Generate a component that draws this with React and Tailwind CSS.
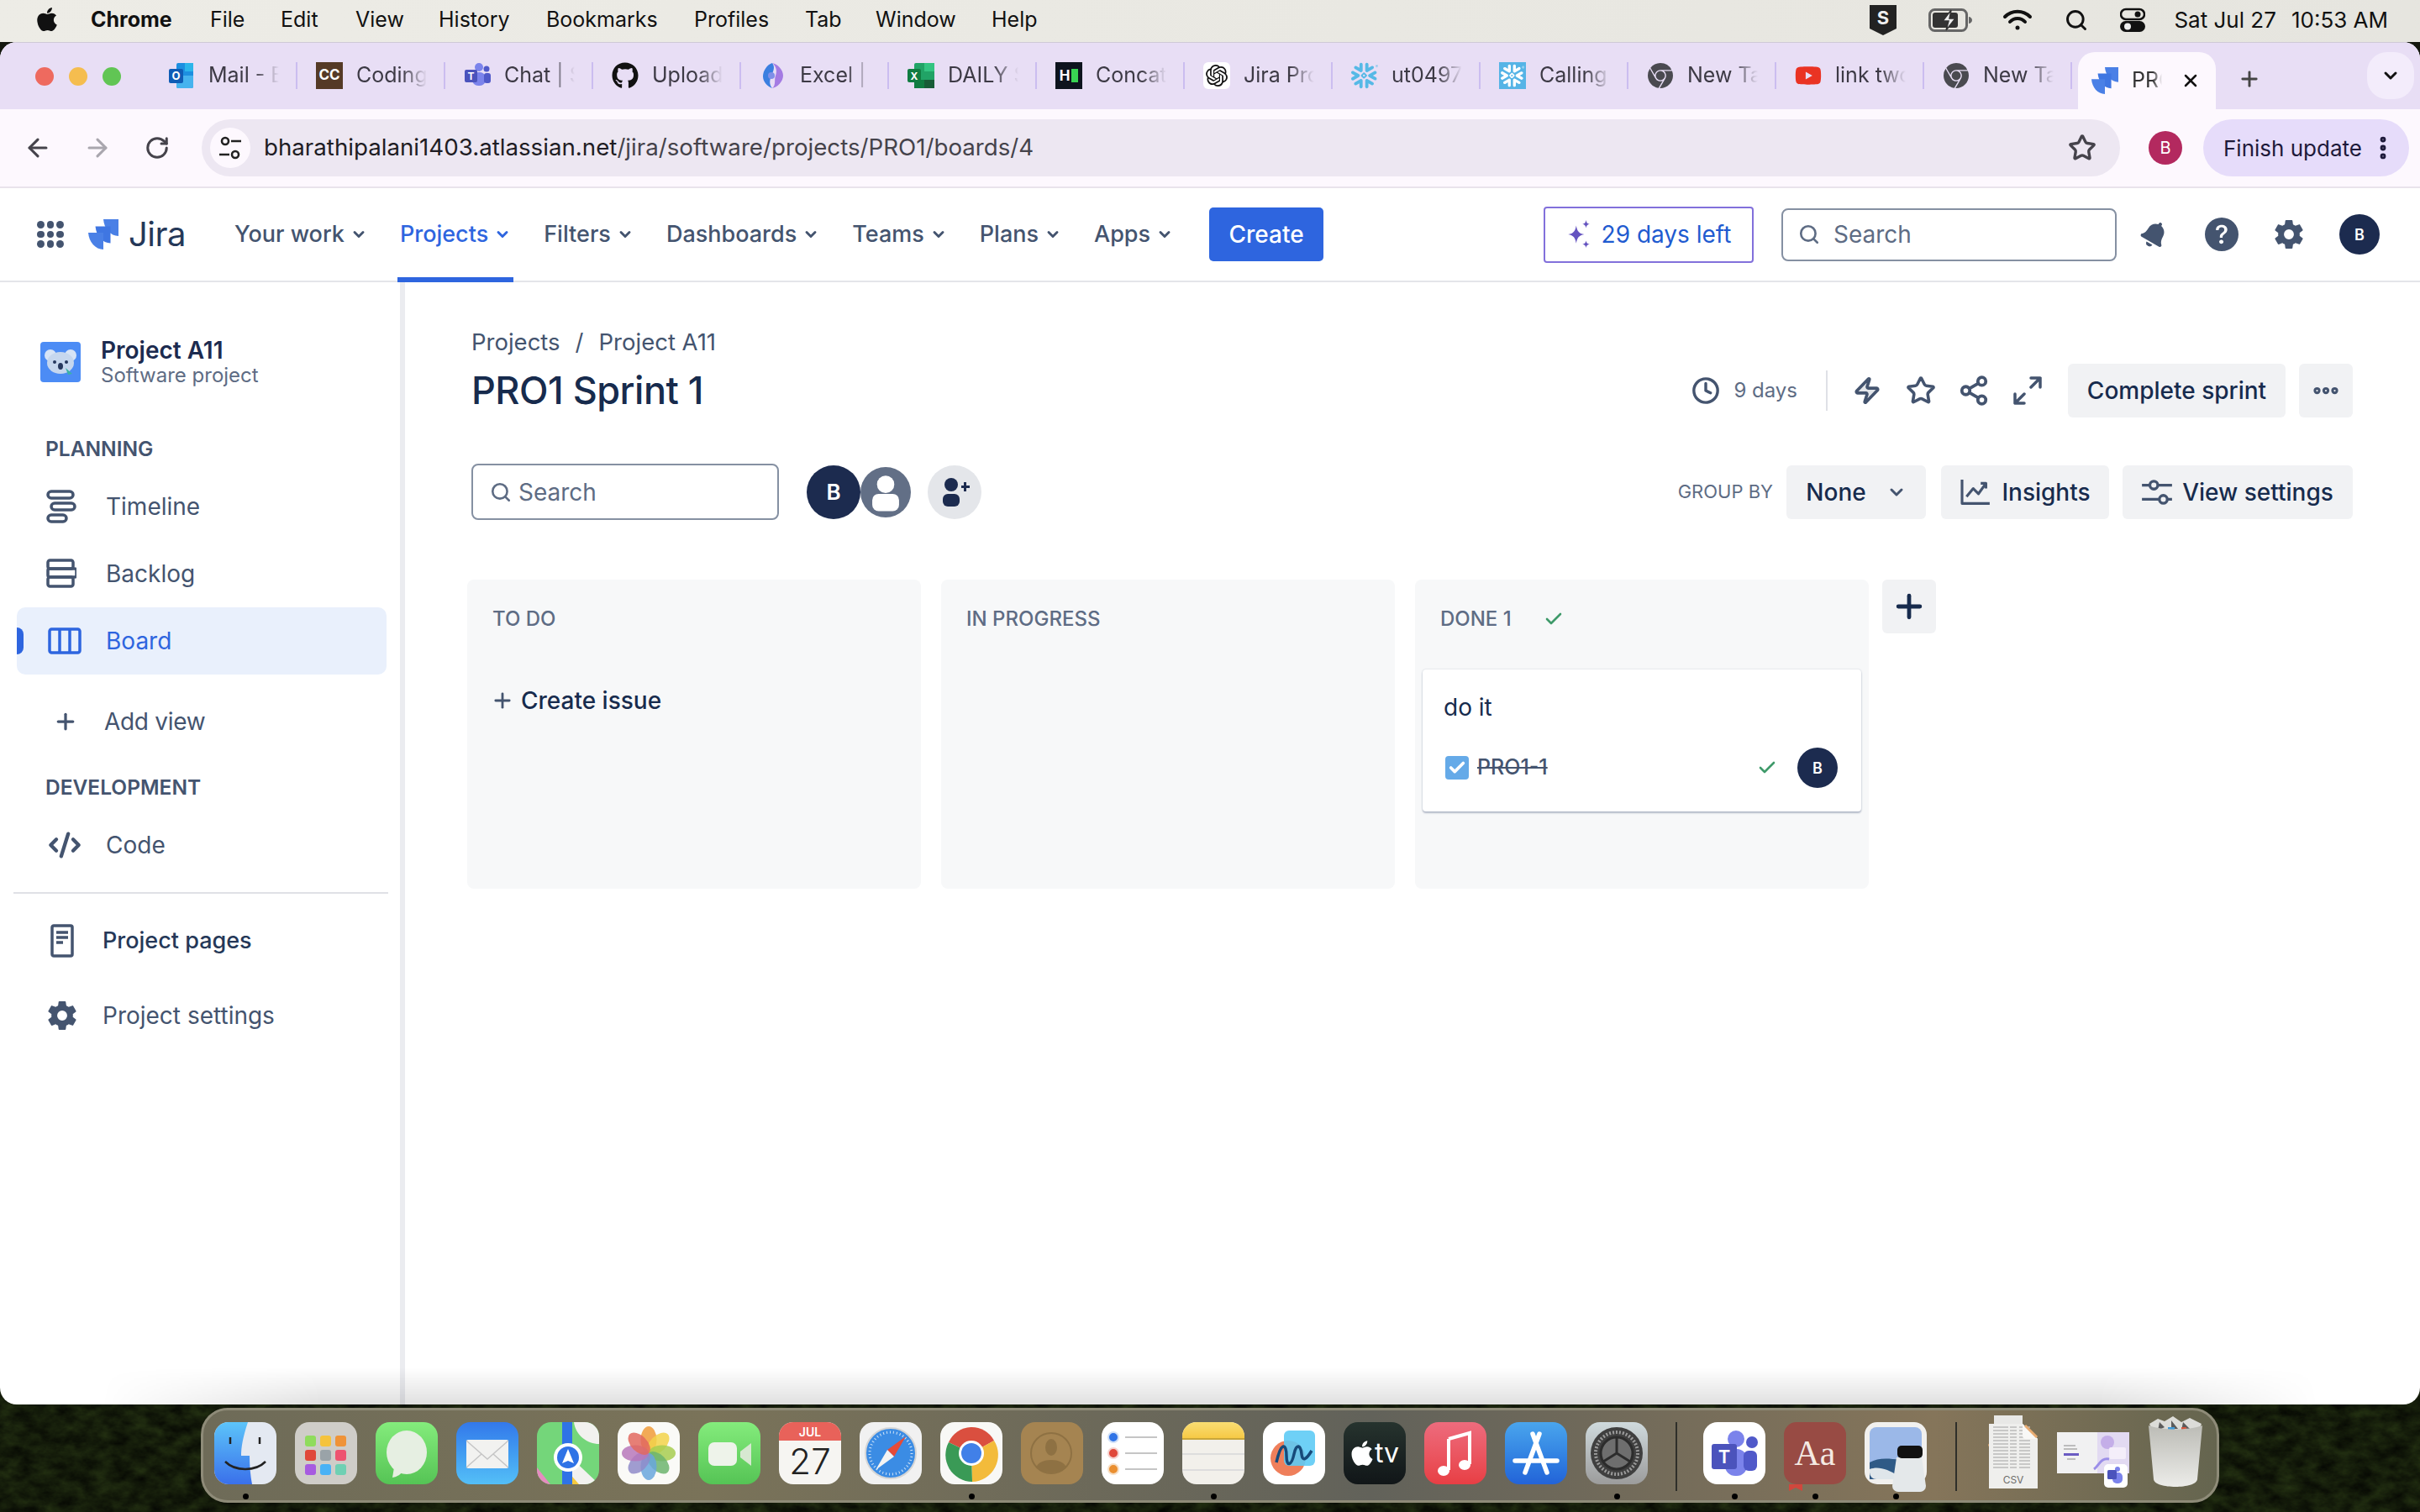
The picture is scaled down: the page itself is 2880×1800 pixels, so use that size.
import {
	ArrowLeft,
	ArrowRight,
	Check,
	ChevronDown,
	Clock,
	CodeXml,
	EllipsisVertical,
	Ellipsis,
	Plus,
	RotateCw,
	Search,
	Share2,
	Star,
	X,
	Zap
} from "lucide-react";
import { FaApple, FaGithub, FaBell, FaYoutube } from "react-icons/fa";
import { BsQuestionCircleFill } from "react-icons/bs";
import { IoSettingsSharp } from "react-icons/io5";
import { SiOpenai, SiSnowflake, SiGooglechrome } from "react-icons/si";

const JiraLogo = ({ className }) => (
	<svg viewBox="0 0 38 38" className={className}>
		<path d="M19 0h19v21C28 21 20 12 19 0z" fill="#4a80e6" />
		<path d="M9 9h19v21C18 30 10 21 9 9z" fill="#3f76e2" />
		<path d="M0 17h19v21C9 38 1 29 0 17z" fill="#4a80e6" />
	</svg>
);

const MenuBar = () => (
	<div className="relative flex h-[50px] items-center bg-gradient-to-r from-[#edece6] to-[#e6e5df] pb-[3px] pl-[42px] pr-[38px] text-[25px] text-[#111]">
		<FaApple className="h-[32px] w-[28px] -translate-y-[1px]" />
		<span className="ml-[38px] w-[142px] font-bold">Chrome</span>
		<span className="w-[84px]">File</span>
		<span className="w-[89px]">Edit</span>
		<span className="w-[99px]">View</span>
		<span className="w-[128px]">History</span>
		<span className="w-[176px]">Bookmarks</span>
		<span className="w-[132px]">Profiles</span>
		<span className="w-[84px]">Tab</span>
		<span className="w-[138px]">Window</span>
		<span>Help</span>
		<div className="ml-auto flex items-center">
			<svg viewBox="0 0 32 36" className="h-[36px] w-[32px]">
				<path d="M0 0h32v28l-16 8-16-8z" fill="#222" />
				<text x="16" y="23" textAnchor="middle" fontSize="22" fontWeight="700" fill="#eee" fontFamily="Inter">S</text>
			</svg>
			<svg viewBox="0 0 52 28" className="ml-[38px] h-[28px] w-[52px]">
				<rect x="1.5" y="1.5" width="44" height="25" rx="6" fill="none" stroke="#666" strokeWidth="3" />
				<rect x="5" y="5" width="30" height="18" rx="3" fill="#333" />
				<path d="M48 10v8c2 0 4-2 4-4s-2-4-4-4z" fill="#666" />
				<path d="M27 2l-10 13h7l-3 11 11-14h-7z" fill="#eee" stroke="#333" strokeWidth="1.5" />
			</svg>
			<svg viewBox="0 0 36 28" className="ml-[36px] h-[28px] w-[36px]" fill="none" stroke="#111" strokeWidth="4" strokeLinecap="round">
				<path d="M3 10a21 21 0 0 1 30 0" />
				<path d="M9 16a12 12 0 0 1 18 0" />
				<circle cx="18" cy="23" r="2.5" fill="#111" stroke="none" />
			</svg>
			<Search className="ml-[38px] h-[28px] w-[28px]" strokeWidth={2.5} />
			<svg viewBox="0 0 30 30" className="ml-[38px] h-[30px] w-[30px]">
				<rect x="1" y="2" width="28" height="12" rx="6" fill="none" stroke="#111" strokeWidth="2.5" />
				<circle cx="21" cy="8" r="3.5" fill="#111" />
				<rect x="0" y="16" width="30" height="13" rx="6.5" fill="#111" />
				<circle cx="9" cy="22.5" r="4" fill="#eee" />
			</svg>
			<span className="ml-[34px] text-[26px]">Sat Jul 27</span>
			<span className="ml-[18px] text-[26px]">10:53 AM</span>
		</div>
	</div>
);

const tabs = [
	{
		title: "Mail - B",
		icon: (
			<svg viewBox="0 0 32 32" className="h-[32px] w-[32px]">
				<rect x="10" y="1" width="20" height="30" rx="2" fill="#1d8fe0" />
				<rect x="20" y="1" width="10" height="10" fill="#2cb5ea" />
				<path d="M10 16l20 0v13a2 2 0 0 1-2 2H12a2 2 0 0 1-2-2z" fill="#46b3ee" />
				<rect x="1" y="8" width="17" height="17" rx="2" fill="#0f5cb5" />
				<text x="9.5" y="21" textAnchor="middle" fontSize="13" fontWeight="700" fill="#fff" fontFamily="Inter">O</text>
			</svg>
		)
	},
	{
		title: "Coding",
		icon: (
			<div className="flex h-[32px] w-[32px] items-center justify-center bg-[#553a26] text-[17px] font-bold text-white">
				CC
			</div>
		)
	},
	{
		title: "Chat | S",
		icon: (
			<svg viewBox="0 0 32 32" className="h-[32px] w-[32px]">
				<circle cx="18" cy="6" r="5" fill="#7b83eb" />
				<circle cx="27" cy="8" r="3.5" fill="#5059c9" />
				<rect x="10" y="12" width="16" height="16" rx="7" fill="#7b83eb" />
				<rect x="24" y="13" width="8" height="12" rx="3" fill="#5059c9" />
				<rect x="1" y="9" width="15" height="15" rx="2" fill="#4b53bc" />
				<text x="8.5" y="21" textAnchor="middle" fontSize="12" fontWeight="700" fill="#fff" fontFamily="Inter">T</text>
			</svg>
		)
	},
	{ title: "Upload", icon: <FaGithub className="h-[32px] w-[32px] text-[#111]" /> },
	{
		title: "Excel | I",
		icon: (
			<svg viewBox="0 0 32 32" className="h-[32px] w-[32px]">
				<path d="M15 1c6 1 13 8 13 15s-7 14-13 15c5-4 2-10 4-15S20 5 15 1z" fill="#a47be3" />
				<path d="M15 1C9 3 4 10 4 17c0 6 5 12 11 14-4-5-3-10-1-15s5-10 1-15z" fill="#3b7fe0" />
				<circle cx="14" cy="16" r="4" fill="#7f8fe8" />
			</svg>
		)
	},
	{
		title: "DAILY S",
		icon: (
			<svg viewBox="0 0 32 32" className="h-[32px] w-[32px]">
				<rect x="8" y="1" width="24" height="30" rx="2" fill="#21a366" />
				<rect x="20" y="1" width="12" height="10" fill="#33c481" />
				<rect x="20" y="21" width="12" height="10" fill="#185c37" />
				<rect x="8" y="21" width="12" height="10" fill="#107c41" />
				<rect x="0" y="8" width="16" height="16" rx="2" fill="#107c41" />
				<text x="8" y="20.5" textAnchor="middle" fontSize="12" fontWeight="700" fill="#fff" fontFamily="Inter">X</text>
			</svg>
		)
	},
	{
		title: "Concat",
		icon: (
			<div className="flex h-[32px] w-[32px] items-center justify-center gap-[2px] bg-[#0e141e]">
				<span className="text-[17px] font-bold leading-none text-white">H</span>
				<span className="h-[16px] w-[8px] bg-[#39d353]" />
			</div>
		)
	},
	{
		title: "Jira Pro",
		icon: (
			<div className="flex h-[32px] w-[32px] items-center justify-center rounded-[6px] bg-white">
				<SiOpenai className="h-[26px] w-[26px] text-[#111]" />
			</div>
		)
	},
	{ title: "ut0497", icon: <SiSnowflake className="h-[32px] w-[32px] text-[#56b9e6]" /> },
	{
		title: "Calling",
		icon: (
			<div className="flex h-[32px] w-[32px] items-center justify-center bg-[#56b4e6]">
				<SiSnowflake className="h-[28px] w-[28px] text-white" />
			</div>
		)
	},
	{ title: "New Ta", icon: <SiGooglechrome className="h-[30px] w-[30px] text-[#4a4a50]" /> },
	{ title: "link two", icon: <FaYoutube className="h-[32px] w-[32px] text-[#ea3323]" /> },
	{ title: "New Ta", icon: <SiGooglechrome className="h-[30px] w-[30px] text-[#4a4a50]" /> }
];

const TabStrip = () => (
	<div className="flex h-[80px] items-start border-t border-[#cfc9d6] bg-[#e8def5]">
		<div className="flex h-[79px] w-[178px] shrink-0 items-center gap-[18px] pl-[42px]">
			<span className="h-[22px] w-[22px] rounded-full bg-[#ee6a5f]" />
			<span className="h-[22px] w-[22px] rounded-full bg-[#f5bd4f]" />
			<span className="h-[22px] w-[22px] rounded-full bg-[#61c554]" />
		</div>
		{tabs.map((tab, i) => (
			<div key={i} className="mt-[23px] flex h-[32px] w-[176px] shrink-0 items-center gap-[16px] border-r-2 border-[#cbbdf0] pl-[22px]">
				<div className="flex h-[32px] w-[32px] shrink-0 items-center justify-center">{tab.icon}</div>
				<span className="w-[84px] overflow-hidden whitespace-nowrap text-[25px] text-[#3d3a45] [mask-image:linear-gradient(90deg,#000_65%,transparent)]">
					{tab.title}
				</span>
			</div>
		))}
		<div className="ml-[7px] mt-[11px] flex h-[68px] w-[164px] shrink-0 items-center rounded-t-[20px] bg-[#fdf8fe] pl-[16px]">
			<JiraLogo className="h-[32px] w-[32px]" />
			<span className="ml-[16px] w-[36px] overflow-hidden whitespace-nowrap text-[25px] text-[#333] [mask-image:linear-gradient(90deg,#000_70%,transparent)]">
				PRO
			</span>
			<X className="ml-[22px] h-[24px] w-[24px] text-[#111]" strokeWidth={2.5} />
		</div>
		<Plus className="ml-[26px] mt-[29px] h-[28px] w-[28px] text-[#444]" strokeWidth={2.5} />
		<div className="ml-[126px] mt-[11px] flex h-[56px] w-[56px] items-center justify-center rounded-[24px] bg-[#f3ecfb]">
			<ChevronDown className="h-[24px] w-[24px] text-[#111]" strokeWidth={3} />
		</div>
	</div>
);

const Toolbar = () => (
	<div className="flex h-[94px] items-center border-b-2 border-[#e9e3ec] bg-[#fdf8fe]">
		<ArrowLeft className="ml-[28px] h-[34px] w-[34px] text-[#45434b]" strokeWidth={2.2} />
		<ArrowRight className="ml-[37px] h-[34px] w-[34px] text-[#a9a6ae]" strokeWidth={2.2} />
		<RotateCw className="ml-[39px] h-[30px] w-[30px] text-[#45434b]" strokeWidth={2.4} />
		<div className="ml-[38px] flex h-[68px] w-[2283px] items-center rounded-full bg-[#ede7f2] pl-[10px] pr-[28px]">
			<div className="flex h-[48px] w-[48px] items-center justify-center rounded-full bg-[#fdf8fe]">
				<svg viewBox="0 0 26 30" className="h-[30px] w-[26px]" fill="none" stroke="#222" strokeWidth="2.600">
					<circle cx="7" cy="7" r="4" />
					<path d="M14 7h12M0 23h12" />
					<circle cx="19" cy="23" r="4" />
				</svg>
			</div>
			<span className="ml-[16px] text-[27.7px] text-[#1f1d24]">
				bharathipalani1403.atlassian.net<span className="text-[#45434b]">/jira/software/projects/PRO1/boards/4</span>
			</span>
			<Star className="ml-auto h-[34px] w-[34px] text-[#45434b]" strokeWidth={2.4} />
		</div>
		<div className="ml-[34px] flex h-[40px] w-[40px] items-center justify-center rounded-full bg-[#b3295f] text-[20px] text-white">
			B
		</div>
		<div className="ml-[25px] flex h-[68px] w-[245px] items-center rounded-full bg-[#e6dcfa] pl-[24px] text-[26px] text-[#1e1a3a]">
			Finish update
			<EllipsisVertical className="ml-[8px] h-[34px] w-[34px] text-[#1e1a3a]" strokeWidth={2.8} />
		</div>
	</div>
);

const navItems = ["Your work", "Projects", "Filters", "Dashboards", "Teams", "Plans", "Apps"];

const TopNav = () => (
	<div className="flex h-[112px] shrink-0 items-center border-b-2 border-[#e4e5e9] bg-white pr-[48px] text-[27px] text-[#44546f]">
		<div className="ml-[44px] grid h-[32px] w-[32px] grid-cols-3 gap-[3px]">
			{[0, 1, 2, 3, 4, 5, 6, 7, 8].map((i) => (
				<span key={i} className="rounded-full bg-[#44546f]" />
			))}
		</div>
		<JiraLogo className="ml-[28px] h-[36px] w-[38px]" />
		<span className="ml-[11px] text-[40px] font-normal leading-none tracking-[-0.5px] text-[#253858]">Jira</span>
		<div className="ml-[58px] flex h-full items-center gap-[39px]">
			{navItems.map((item) => (
				<div key={item} className={`relative flex h-full items-center gap-[7px] ${item === "Projects" ? "font-medium text-[#2e65df]" : "font-medium"}`}>
					{item}
					<ChevronDown className="h-[20px] w-[20px]" strokeWidth={3.5} />
					{item === "Projects" && <span className="absolute -bottom-[2px] -left-[3px] -right-[3px] h-[6px] bg-[#2e65df]" />}
				</div>
			))}
		</div>
		<div className="ml-[43px] flex h-[64px] w-[136px] items-center justify-center rounded-[5px] bg-[#2e65df] text-[28px] font-medium text-white">
			Create
		</div>
		<div className="ml-auto flex h-[67px] w-[250px] items-center justify-center gap-[12px] rounded-[4px] border-2 border-[#8270db] text-[28px] text-[#1f5bd0]">
			<svg viewBox="0 0 28 32" className="h-[34px] w-[30px]" fill="#6554c0">
				<path d="M11 6c1 6 3 9 9 10-6 1-8 4-9 10-1-6-3-9-9-10 6-1 8-4 9-10z" />
				<path d="M22 0c.5 3 1.500 4 4 4.500-2.500.5-3.500 1.500-4 4.500-.5-3-1.500-4-4-4.500 2.500-.5 3.500-1.500 4-4.500zM22 23c.5 2.500 1.500 3.500 4 4-2.500.5-3.500 1.500-4 4-.5-2.500-1.500-3.500-4-4 2.500-.5 3.500-1.500 4-4z" />
			</svg>
			29 days left
		</div>
		<div className="ml-[33px] flex h-[63px] w-[399px] items-center rounded-[8px] border-2 border-[#8590a2] pl-[18px] text-[28px] text-[#5e6c84]">
			<Search className="h-[26px] w-[26px]" strokeWidth={2.4} />
			<span className="ml-[16px]">Search</span>
		</div>
		<FaBell className="ml-[29px] h-[32px] w-[32px] rotate-[30deg] text-[#44546f]" />
		<BsQuestionCircleFill className="ml-[44px] h-[40px] w-[40px] text-[#44546f]" />
		<IoSettingsSharp className="ml-[41px] h-[38px] w-[38px] text-[#44546f]" />
		<div className="ml-[41px] flex h-[48px] w-[48px] items-center justify-center rounded-full bg-[#1c2b4f] text-[18px] font-semibold text-white">
			B
		</div>
	</div>
);

const TimelineIcon = () => (
	<svg viewBox="0 0 36 40" className="h-[40px] w-[36px]" fill="none" stroke="#44546f" strokeWidth="3.500">
		<rect x="2" y="2" width="30" height="8" rx="4" />
		<rect x="6" y="16" width="28" height="8" rx="4" />
		<rect x="2" y="30" width="22" height="8" rx="4" />
	</svg>
);

const BacklogIcon = () => (
	<svg viewBox="0 0 36 36" className="h-[36px] w-[36px]" fill="none" stroke="#44546f" strokeWidth="3.500">
		<rect x="2" y="2" width="30" height="10" rx="2.500" />
		<rect x="2" y="12" width="34" height="10" rx="2" />
		<rect x="2" y="22" width="30" height="11" rx="2.500" />
	</svg>
);

const BoardIcon = () => (
	<svg viewBox="0 0 40 32" className="h-[32px] w-[40px]" fill="none" stroke="#2e65df" strokeWidth="3.500">
		<rect x="2" y="2" width="36" height="28" rx="2.500" />
		<path d="M14 2v28M26 2v28" />
	</svg>
);

const PagesIcon = () => (
	<svg viewBox="0 0 28 40" className="h-[40px] w-[28px]" fill="none" stroke="#44546f" strokeWidth="3.500">
		<rect x="2" y="2" width="24" height="36" rx="2" />
		<path d="M7 10h14M7 16h14M7 22h8" />
	</svg>
);

const SideRow = ({ icon, label, active, iconBox = "ml-[35px] w-[56px]", textClass = "" }) => (
	<div className={`relative ml-[20px] mr-[16px] flex h-[80px] items-center rounded-[10px] text-[28px] ${active ? "bg-[#e9f0fc] text-[#2e65df]" : "text-[#44546f]"} ${textClass}`}>
		{active && <span className="absolute left-0 h-[32px] w-[8px] rounded-r-full bg-[#2e65df]" />}
		<div className={`flex shrink-0 items-center ${iconBox}`}>{icon}</div>
		<span className="ml-[15px]">{label}</span>
	</div>
);

const Sidebar = () => (
	<aside className="w-[476px] shrink-0">
		<div className="ml-[48px] mt-[69px] flex h-[52px] items-center">
			<svg viewBox="0 0 48 48" className="h-[48px] w-[48px]">
				<rect width="48" height="48" rx="4" fill="#4c8cf5" />
				<circle cx="12" cy="16" r="7" fill="#d7e4f6" />
				<circle cx="36" cy="16" r="7" fill="#d7e4f6" />
				<ellipse cx="24" cy="25" rx="16" ry="13" fill="#c6d7ee" />
				<circle cx="17" cy="24" r="2" fill="#26385e" />
				<circle cx="31" cy="24" r="2" fill="#26385e" />
				<ellipse cx="24" cy="29" rx="3" ry="4" fill="#26385e" />
				<path d="M30 31l8 7-5 1z" fill="#3bb2a6" />
			</svg>
			<div className="ml-[24px]">
				<div className="text-[28px] font-semibold leading-[32px] text-[#1c2b4f]">Project A11</div>
				<div className="text-[24px] leading-[28px] text-[#5e6c84]">Software project</div>
			</div>
		</div>
		<div className="ml-[54px] mt-[62px] h-[30px] text-[24.500px] font-semibold leading-[30px] text-[#44546f]">PLANNING</div>
		<div className="mt-[14px]">
			<SideRow icon={<TimelineIcon />} label="Timeline" />
			<SideRow icon={<BacklogIcon />} label="Backlog" />
			<SideRow icon={<BoardIcon />} label="Board" active iconBox="ml-[37px] w-[54px]" />
		</div>
		<div className="mt-[16px]">
			<SideRow icon={<Plus className="ml-[3px] h-[30px] w-[30px] text-[#44546f]" strokeWidth={2.6} />} label="Add view" iconBox="ml-[40px] w-[49px]" textClass="tracking-[-0.3px]" />
		</div>
		<div className="ml-[54px] mt-[23px] h-[30px] text-[24.500px] font-semibold leading-[30px] text-[#44546f]">DEVELOPMENT</div>
		<div className="mt-[14px]">
			<SideRow icon={<CodeXml className="h-[40px] w-[40px] text-[#44546f]" strokeWidth={2.6} />} label="Code" iconBox="ml-[37px] w-[54px]" />
		</div>
		<div className="ml-[16px] mr-[14px] mt-[16px] h-[2px] bg-[#dfe1e6]" />
		<div className="mt-[16px]">
			<SideRow icon={<PagesIcon />} label="Project pages" iconBox="ml-[40px] w-[47px]" textClass="!text-[27px] font-medium !text-[#253858]" />
		</div>
		<div className="mt-[9px]">
			<SideRow icon={<IoSettingsSharp className="h-[38px] w-[38px] text-[#44546f]" />} label="Project settings" iconBox="ml-[35px] w-[52px]" />
		</div>
	</aside>
);

const ExpandIcon = () => (
	<svg viewBox="0 0 34 34" className="h-[34px] w-[34px]" fill="none" stroke="#44546f" strokeWidth="3.500" strokeLinecap="round" strokeLinejoin="round">
		<path d="M21 13l11-11M21 2h11v11M13 21L2 32M2 21v11h11" />
	</svg>
);

const GrayButton = ({ className, children }) => (
	<div className={`flex h-[64px] items-center justify-center rounded-[6px] bg-[#f1f2f4] text-[28px] font-medium text-[#172b4d] ${className}`}>
		{children}
	</div>
);

const Column = ({ children }) => (
	<div className="h-[368px] w-[540px] rounded-[8px] bg-[#f7f8f9]">{children}</div>
);

const ColumnTitle = ({ children }) => (
	<div className="flex h-[94px] items-center pl-[30px] text-[24px] font-medium text-[#5e6c84]">{children}</div>
);

const Board = () => (
	<main className="min-w-0 flex-1 pl-[79px] pr-[80px]">
		<div className="mt-[55px] flex h-[34px] items-center text-[27.500px] text-[#44546f]">
			<span>Projects</span>
			<span className="ml-[18px]">/</span>
			<span className="ml-[18px]">Project A11</span>
		</div>
		<div className="mt-[8px] flex h-[64px] items-center">
			<h1 className="text-[45px] font-medium tracking-[-0.5px] text-[#172b4d]">PRO1 Sprint 1</h1>
			<Clock className="ml-auto h-[34px] w-[34px] text-[#44546f]" strokeWidth={2.4} />
			<span className="ml-[16px] text-[24px] text-[#5e6c84]">9 days</span>
			<span className="ml-[34px] h-[48px] w-[2px] bg-[#dfe1e6]" />
			<Zap className="ml-[30px] h-[36px] w-[34px] text-[#44546f]" fill="#44546f" fillOpacity={0.15} strokeWidth={2.6} />
			<Star className="ml-[29px] h-[36px] w-[36px] text-[#44546f]" strokeWidth={2.4} />
			<Share2 className="ml-[26px] h-[38px] w-[38px] text-[#44546f]" strokeWidth={2.4} />
			<div className="ml-[28px]"><ExpandIcon /></div>
			<GrayButton className="ml-[31px] w-[259px]">Complete sprint</GrayButton>
			<GrayButton className="ml-[16px] w-[64px]"><Ellipsis className="h-[36px] w-[36px] text-[#44546f]" strokeWidth={3.5} /></GrayButton>
		</div>
		<div className="mt-[55px] flex h-[67px] items-center">
			<div className="flex h-[67px] w-[366px] items-center rounded-[8px] border-2 border-[#8590a2] pl-[20px] text-[28px] text-[#5e6c84]">
				<Search className="h-[26px] w-[26px]" strokeWidth={2.4} />
				<span className="ml-[8px]">Search</span>
			</div>
			<div className="ml-[33px] flex h-[64px] w-[64px] items-center justify-center rounded-full bg-[#1c2b4f] text-[26px] font-semibold text-white">
				B
			</div>
			<svg viewBox="0 0 64 64" className="h-[64px] w-[60px]">
				<circle cx="32" cy="32" r="32" fill="#626f86" />
				<circle cx="32" cy="22" r="11" fill="#fff" />
				<rect x="15" y="34" width="34" height="22" rx="8" fill="#fff" />
			</svg>
			<div className="ml-[20px] flex h-[64px] w-[64px] items-center justify-center rounded-full bg-[#e4e6ea]">
				<svg viewBox="0 0 36 36" className="h-[36px] w-[36px]" fill="#1c2b4f">
					<circle cx="14" cy="9" r="8" />
					<rect x="4" y="20" width="20" height="15" rx="6" />
					<path d="M26 10h3V6h3v4h4v3h-4v4h-3v-4h-3z" />
				</svg>
			</div>
			<span className="ml-auto text-[22px] text-[#5e6c84]">GROUP BY</span>
			<GrayButton className="ml-[16px] w-[166px] gap-[24px]">
				<span>None</span>
				<ChevronDown className="h-[24px] w-[24px] text-[#44546f]" strokeWidth={3} />
			</GrayButton>
			<GrayButton className="ml-[18px] w-[200px] gap-[12px]">
				<svg viewBox="0 0 40 36" className="h-[32px] w-[38px]" fill="none" stroke="#44546f" strokeWidth="3.500" strokeLinejoin="round">
					<path d="M2 1v32h37" />
					<path d="M8 24l9-11 7 7 10-14M27 6h7v7" />
				</svg>
				Insights
			</GrayButton>
			<GrayButton className="ml-[16px] w-[274px] gap-[12px]">
				<svg viewBox="0 0 38 34" className="h-[32px] w-[36px]" fill="none" stroke="#44546f" strokeWidth="3.500">
					<path d="M0 8h10M20 8h18M0 26h22M32 26h6" />
					<circle cx="15" cy="8" r="5" />
					<circle cx="27" cy="26" r="5" />
				</svg>
				View settings
			</GrayButton>
		</div>
		<div className="-ml-[5px] mt-[71px] flex items-start gap-[24px]">
			<Column>
				<ColumnTitle>TO DO</ColumnTitle>
				<div className="mt-[25px] flex h-[50px] items-center pl-[28px] text-[28px] font-medium text-[#172b4d]">
					<Plus className="h-[28px] w-[28px] text-[#44546f]" strokeWidth={2.4} />
					<span className="ml-[8px]">Create issue</span>
				</div>
			</Column>
			<Column>
				<ColumnTitle>IN PROGRESS</ColumnTitle>
			</Column>
			<Column>
				<ColumnTitle>
					DONE 1
					<Check className="ml-[38px] h-[24px] w-[24px] text-[#3f9a6a]" strokeWidth={2.6} />
				</ColumnTitle>
				<div className="mx-[9px] mt-[13px] flex h-[169px] flex-col rounded-[4px] bg-white pl-[25px] pr-[28px] shadow-[0_2px_2px_#b3bac8,0_0_2px_#c4c9d4]">
					<div className="mt-[28px] text-[28px] leading-[34px] text-[#172b4d]">do it</div>
					<div className="mt-[31px] flex items-center">
						<div className="ml-[2px] flex h-[28px] w-[28px] items-center justify-center rounded-[4px] bg-[#65aae8]">
							<Check className="h-[22px] w-[22px] text-white" strokeWidth={4} />
						</div>
						<span className="ml-[10px] text-[25px] font-medium text-[#44546f] line-through">PRO1-1</span>
						<Check className="ml-auto h-[24px] w-[24px] text-[#3f9a6a]" strokeWidth={2.6} />
						<div className="ml-[24px] flex h-[48px] w-[48px] items-center justify-center rounded-full bg-[#1c2b4f] text-[18px] font-semibold text-white">
							B
						</div>
					</div>
				</div>
			</Column>
			<GrayButton className="-ml-[8px] w-[64px]">
				<Plus className="h-[44px] w-[44px] text-[#172b4d]" strokeWidth={2.6} />
			</GrayButton>
		</div>
	</main>
);

const Squircle = ({ className = "", children }) => (
	<div className={`relative h-[74px] w-[74px] overflow-hidden rounded-[17px] ${className}`}>{children}</div>
);

const Art = ({ children }) => (
	<svg viewBox="0 0 74 74" className="h-[74px] w-[74px]">{children}</svg>
);

const dockApps = [
	{
		dot: true,
		icon: (
			<Squircle className="bg-[#e4e9f2]">
				<Art>
					<defs>
						<linearGradient id="finder" x1="0" y1="0" x2="0" y2="1">
							<stop offset="0" stopColor="#5cc4fa" />
							<stop offset="1" stopColor="#3a70ea" />
						</linearGradient>
					</defs>
					<path d="M0 0h40c-6 18-8 30-8 40h10c0 12 1 24 3 34H0z" fill="url(#finder)" />
					<path d="M19 18v8M54 18v8" stroke="#222" strokeWidth="2.500" />
					<path d="M13 47c12 12 36 12 48 0" fill="none" stroke="#222" strokeWidth="2.500" />
				</Art>
			</Squircle>
		)
	},
	{
		icon: (
			<Squircle className="bg-[#cfcdc8]">
				<Art>
					<rect x="12" y="16" width="13" height="13" rx="3" fill="#8fdc5c" />
					<rect x="30" y="16" width="13" height="13" rx="3" fill="#f5c33c" />
					<rect x="48" y="16" width="13" height="13" rx="3" fill="#ef9338" />
					<rect x="12" y="33" width="13" height="13" rx="3" fill="#e0483a" />
					<rect x="30" y="33" width="13" height="13" rx="3" fill="#9aa3a8" />
					<rect x="48" y="33" width="13" height="13" rx="3" fill="#ee5370" />
					<rect x="12" y="50" width="13" height="13" rx="3" fill="#a75be0" />
					<rect x="30" y="50" width="13" height="13" rx="3" fill="#4ab2f5" />
					<rect x="48" y="50" width="13" height="13" rx="3" fill="#6fd0b3" />
				</Art>
			</Squircle>
		)
	},
	{
		icon: (
			<Squircle className="bg-gradient-to-b from-[#84ec7c] to-[#55c455]">
				<Art>
					<ellipse cx="37" cy="36" rx="24" ry="26" fill="#e6efe2" />
					<path d="M22 54l-2 12c6-1 10-4 13-8z" fill="#e6efe2" />
				</Art>
			</Squircle>
		)
	},
	{
		icon: (
			<Squircle className="bg-gradient-to-b from-[#3478ea] to-[#54bff7]">
				<Art>
					<rect x="12" y="21" width="50" height="34" rx="2" fill="#f2f2f0" />
					<path d="M12 22l25 22 25-22M12 54l18-16M62 54L44 38" fill="none" stroke="#c5c5c5" strokeWidth="1.500" />
				</Art>
			</Squircle>
		)
	},
	{
		icon: (
			<Squircle className="bg-[#74d67a]">
				<Art>
					<path d="M44 0h30v26C60 26 46 16 44 0z" fill="#f2f1ef" />
					<path d="M0 54l16 20H0z" fill="#e58cc0" />
					<path d="M44 58l14 16H40z" fill="#f5c93e" />
					<path d="M36 38l38 36H50L24 44z" fill="#f2f1ef" />
					<rect x="30" y="0" width="12" height="74" fill="#2f73e6" />
					<circle cx="37" cy="42" r="17" fill="#fff" />
					<circle cx="37" cy="42" r="13" fill="#2f73e6" />
					<path d="M37 32l7 17-7-3-7 3z" fill="#fff" />
				</Art>
			</Squircle>
		)
	},
	{
		icon: (
			<Squircle className="bg-[#fafaf7]">
				<Art>
					{[["#f09b3a", 0], ["#f2d24a", 45], ["#a7cc50", 90], ["#6cb46f", 135], ["#68a6dd", 180], ["#8f8bc9", 225], ["#b777bb", 270], ["#e2685f", 315]].map(([c, r]) => (
						<ellipse key={r} cx="37" cy="21" rx="9.500" ry="16" fill={c} opacity="0.85" transform={`rotate(${r} 37 37)`} />
					))}
				</Art>
			</Squircle>
		)
	},
	{
		icon: (
			<Squircle className="bg-gradient-to-b from-[#84ec7c] to-[#55c455]">
				<Art>
					<rect x="12" y="24" width="34" height="28" rx="7" fill="#eef3ea" />
					<path d="M50 35l13-10v27L50 42z" fill="#d7e8d1" />
				</Art>
			</Squircle>
		)
	},
	{
		icon: (
			<Squircle className="bg-[#f6f5f2]">
				<div className="flex h-[22px] items-center justify-center bg-[#e8625a] text-[14px] font-semibold text-white">JUL</div>
				<div className="text-center text-[42px] font-light leading-[50px] text-[#222]">27</div>
			</Squircle>
		)
	},
	{
		icon: (
			<Squircle className="bg-[#f1f1f1]">
				<Art>
					<circle cx="37" cy="37" r="30" fill="#3b8ce4" stroke="#d5d5d5" strokeWidth="2" />
					<circle cx="37" cy="37" r="25" fill="none" stroke="#cfe3f7" strokeWidth="3" strokeDasharray="1 3" />
					<path d="M55 17L33 33l8 8z" fill="#e64a38" />
					<path d="M19 57l22-16-8-8z" fill="#f4f4f4" />
				</Art>
			</Squircle>
		)
	},
	{
		dot: true,
		icon: (
			<Squircle className="bg-[#f8f8f6]">
				<Art>
					<path d="M37 37L10 24a30 30 0 0 1 54-2z" fill="#da4f3f" />
					<path d="M37 37l27-15a32 32 0 0 1-26 49z" fill="#f3bb3b" />
					<path d="M37 37L38 71A32 32 0 0 1 10 24z" fill="#3a9a56" />
					<circle cx="37" cy="37" r="15" fill="#fff" />
					<circle cx="37" cy="37" r="12" fill="#4180e8" />
				</Art>
			</Squircle>
		)
	},
	{
		icon: (
			<Squircle className="bg-[#a58451]">
				<Art>
					<circle cx="36" cy="37" r="24" fill="none" stroke="#8e7143" strokeWidth="2" />
					<ellipse cx="36" cy="30" rx="7" ry="10" fill="#8e7143" />
					<path d="M18 54c4-12 32-12 36 0-10 8-26 8-36 0z" fill="#8e7143" />
				</Art>
			</Squircle>
		)
	},
	{
		icon: (
			<Squircle className="bg-white">
				<Art>
					<circle cx="14" cy="18" r="6" fill="#2f73e6" stroke="#cfdff7" strokeWidth="2" />
					<circle cx="14" cy="37" r="6" fill="#e0483a" stroke="#f5d2cf" strokeWidth="2" />
					<circle cx="14" cy="56" r="6" fill="#ea8f30" stroke="#f7dfc4" strokeWidth="2" />
					<path d="M28 18h38M28 37h38M28 56h38" stroke="#c5c5c5" strokeWidth="2" />
				</Art>
			</Squircle>
		)
	},
	{
		dot: true,
		icon: (
			<Squircle className="bg-[#f2f0eb]">
				<div className="h-[19px] bg-gradient-to-b from-[#f9dd72] to-[#f6c944]" />
				<div className="h-[2px] bg-[#c9a63a]" />
				<div className="mt-[16px] h-[2px] bg-[#ddd]" />
				<div className="mt-[17px] h-[2px] bg-[#ddd]" />
			</Squircle>
		)
	},
	{
		icon: (
			<Squircle className="bg-white">
				<Art>
					<circle cx="30" cy="43" r="21" fill="#ef7f5b" />
					<rect x="25" y="10" width="37" height="42" rx="6" fill="#5ecbf5" opacity="0.9" />
					<path d="M16 48c6-26 12-22 12-8s6 12 9-2 8-10 9 0 6 6 12-4" fill="none" stroke="#174a7a" strokeWidth="3.500" />
				</Art>
			</Squircle>
		)
	},
	{
		icon: (
			<Squircle className="flex items-center justify-center gap-[1px] bg-gradient-to-b from-[#26332e] to-[#111618] text-[32px] text-white">
				<FaApple className="h-[34px] w-[28px]" />
				<span>tv</span>
			</Squircle>
		)
	},
	{
		icon: (
			<Squircle className="bg-gradient-to-b from-[#ed6b7d] to-[#e83e44]">
				<Art>
					<path d="M29 20l25-7v37" fill="none" stroke="#fff" strokeWidth="4" />
					<path d="M29 20v37" stroke="#fff" strokeWidth="4" />
					<ellipse cx="23" cy="58" rx="7" ry="6" fill="#fff" />
					<ellipse cx="48" cy="51" rx="7" ry="6" fill="#fff" />
				</Art>
			</Squircle>
		)
	},
	{
		icon: (
			<Squircle className="bg-gradient-to-b from-[#4aa5ed] to-[#2363d8]">
				<Art>
					<path d="M24 60L41 14M50 60L33 14M12 46h50" stroke="#fff" strokeWidth="5.500" strokeLinecap="round" />
				</Art>
			</Squircle>
		)
	},
	{
		dot: true,
		icon: (
			<Squircle className="bg-gradient-to-b from-[#cfdadd] to-[#9c9c9c]">
				<Art>
					<circle cx="37" cy="37" r="31" fill="#3f3f3f" />
					<circle cx="37" cy="37" r="25" fill="none" stroke="#9a9a9a" strokeWidth="4" strokeDasharray="2 2" />
					<circle cx="37" cy="37" r="19" fill="#6e6e6e" stroke="#2c2c2c" strokeWidth="3" />
					<path d="M37 37V18M37 37L21 47M37 37l16 10" stroke="#2c2c2c" strokeWidth="3" />
				</Art>
			</Squircle>
		)
	},
	{ separator: "ml-[11px] mr-[9px]" },
	{
		dot: true,
		icon: (
			<Squircle className="bg-white">
				<Art>
					<circle cx="39" cy="20" r="10" fill="#7b83eb" />
					<circle cx="58" cy="24" r="7" fill="#5059c9" />
					<rect x="26" y="32" width="26" height="32" rx="12" fill="#7b83eb" />
					<rect x="48" y="34" width="16" height="24" rx="6" fill="#5059c9" />
					<rect x="10" y="26" width="30" height="30" rx="3" fill="#4b53bc" />
					<text x="25" y="49" textAnchor="middle" fontSize="22" fontWeight="600" fill="#fff" fontFamily="Inter">T</text>
				</Art>
			</Squircle>
		)
	},
	{
		dot: true,
		icon: (
			<div className="h-[74px] w-[74px]">
				<div className="flex h-[74px] w-[74px] items-center justify-center rounded-[15px] bg-[#984b44] font-[Liberation_Serif,serif] text-[42px] text-[#f4e9e2]">
					Aa
				</div>
				<svg viewBox="0 0 16 8" className="ml-[6px] h-[8px] w-[16px]">
					<path d="M0 0h16v8l-8-4-8 4z" fill="#d0473d" />
				</svg>
			</div>
		)
	},
	{
		dot: true,
		icon: (
			<div className="h-[74px] w-[74px]">
				<svg viewBox="0 0 74 84" className="h-[84px] w-[74px]">
					<rect width="74" height="74" rx="15" fill="#f1f0ee" />
					<rect x="6" y="6" width="62" height="62" rx="8" fill="#9bb8e8" />
					<path d="M6 48c14-8 28-4 62 0v20H6z" fill="#2f5a86" />
					<path d="M6 56c10-4 22 0 34 8l-4 4H14a8 8 0 0 1-8-8z" fill="#dfe6ea" />
					<path d="M38 42h30l5 34a7 7 0 0 1-7 7H40a7 7 0 0 1-7-7z" fill="#e4e8ea" />
					<rect x="39" y="28" width="30" height="15" rx="5" fill="#111" />
				</svg>
			</div>
		)
	},
	{ separator: "ml-[12px] mr-[15px]" },
	{
		icon: (
			<div className="h-[74px] w-[60px]">
				<svg viewBox="0 0 60 87" className="-mt-[8px] h-[87px] w-[60px]">
					<path d="M0 35l8-10v30zM60 25l4 12-4 14z" fill="#e8ac72" />
					<rect x="7" y="0" width="34" height="14" fill="#e8e8e6" />
					<path d="M1 10h40l18 18v59H1z" fill="#efefed" />
					{[14, 18, 22, 26, 30, 34, 38, 42, 46, 50, 54, 58, 62].map((y) => (
						<path key={y} d="M6 0h44" transform={`translate(0 ${y})`} stroke="#bcbcba" strokeWidth="1.500" strokeDasharray="18 2 8 3" />
					))}
					<path d="M41 10l18 18H45a4 4 0 0 1-4-4z" fill="#f8f8f6" />
					<path d="M44 12l14 14" stroke="#e8ac72" strokeWidth="3" />
					<text x="30" y="81" textAnchor="middle" fontSize="12" fill="#6d6d6b" fontFamily="Inter">CSV</text>
				</svg>
			</div>
		)
	},
	{
		icon: (
			<div className="h-[74px] w-[86px]">
				<svg viewBox="0 0 86 78" className="h-[78px] w-[86px]">
					<rect y="12" width="86" height="49" fill="#f1f1f2" />
					<rect x="48" y="12" width="38" height="49" fill="#e2daf2" />
					<rect x="8" y="37" width="18" height="3" fill="#6a5bc2" />
					<path d="M8 28h14M8 32h16M12 44h10" stroke="#888" strokeWidth="1" />
					<circle cx="60" cy="24" r="8" fill="#c4aee8" />
					<rect x="62" y="30" width="20" height="14" rx="2" fill="#f4eefa" />
					<path d="M44 56c6-4 8-14 18-12" fill="none" stroke="#9b8ee8" strokeWidth="3" />
					<rect x="56" y="50" width="28" height="28" rx="5" fill="#fff" />
					<circle cx="72" cy="56" r="3" fill="#7b83eb" />
					<rect x="66" y="60" width="12" height="13" rx="5" fill="#7b83eb" />
					<rect x="60" y="57" width="11" height="11" rx="1.500" fill="#4b53bc" />
				</svg>
			</div>
		)
	},
	{
		icon: (
			<div className="h-[74px] w-[66px]">
				<svg viewBox="0 0 66 87" className="-mt-[8px] h-[87px] w-[66px]">
					<defs>
						<linearGradient id="trash" x1="0" y1="0" x2="0" y2="1">
							<stop offset="0" stopColor="#bcbcb6" />
							<stop offset="1" stopColor="#ecece9" />
						</linearGradient>
					</defs>
					<path d="M2 10l10-6 8 3 10-6 10 7 10-5 14 7-4 10H6z" fill="#dcdcd8" />
					<path d="M14 8l6 6-8 4zM28 6l8 10-8 0zM42 8l8 8-10 2z" fill="#5b5b5b" />
					<path d="M24 14h8v4h-8z" fill="#3f9ad8" />
					<path d="M40 14h6v5h-6z" fill="#d4583e" />
					<path d="M1 12c16 6 48 6 64 0l-6 64c-1 12-51 12-52 0z" fill="url(#trash)" />
				</svg>
			</div>
		)
	}
];

const Dock = () => (
	<div className="relative ml-[239px] mt-[4px] flex h-[113px] w-[2402px] items-start gap-[22px] rounded-[32px] border-[3px] border-[#8e8b78] bg-[linear-gradient(90deg,#6e6b58,#7a7359_25%,#62625a_58%,#85755a_86%,#65654f)] pl-[13px] pt-[14px]">
		{dockApps.map((app, i) =>
			app.separator ? (
				<div key={i} className={`h-[82px] w-[2px] bg-[#2f2f2a] ${app.separator}`} />
			) : (
				<div key={i} className="flex flex-col items-center">
					{app.icon}
					{app.dot && <span className="mt-[11px] h-[7px] w-[7px] rounded-full bg-black" />}
				</div>
			)
		)}
	</div>
);

const Wallpaper = () => (
	<svg className="absolute bottom-0 left-0 h-[150px] w-[2880px]">
		<filter id="foliage" colorInterpolationFilters="sRGB">
			<feTurbulence type="fractalNoise" baseFrequency="0.045 0.07" numOctaves="4" seed="7" />
			<feColorMatrix values="0.16 0 0 0 0  0.22 0 0 0 0  0.08 0 0 0 0  0 0 0 0 1" />
		</filter>
		<rect width="2880" height="150" fill="#14170e" filter="url(#foliage)" />
	</svg>
);

const App = () => {
	return (
		<div className="relative flex h-[1800px] w-[2880px] flex-col overflow-hidden bg-[#14170e] font-[Inter,sans-serif]">
			<Wallpaper />
			<MenuBar />
			<div className="relative flex h-[1622px] flex-col overflow-hidden rounded-[20px] bg-white">
				<TabStrip />
				<Toolbar />
				<TopNav />
				<div className="flex min-h-0 flex-1">
					<Sidebar />
					<div className="w-[6px] shrink-0 bg-[#ebecf0]" />
					<Board />
				</div>
				<div className="absolute inset-x-[120px] bottom-0 h-[44px] bg-gradient-to-b from-transparent to-[#0000001f] [mask-image:linear-gradient(90deg,transparent,#000_10%,#000_90%,transparent)]" />
			</div>
			<Dock />
		</div>
	);
};

export default App;
